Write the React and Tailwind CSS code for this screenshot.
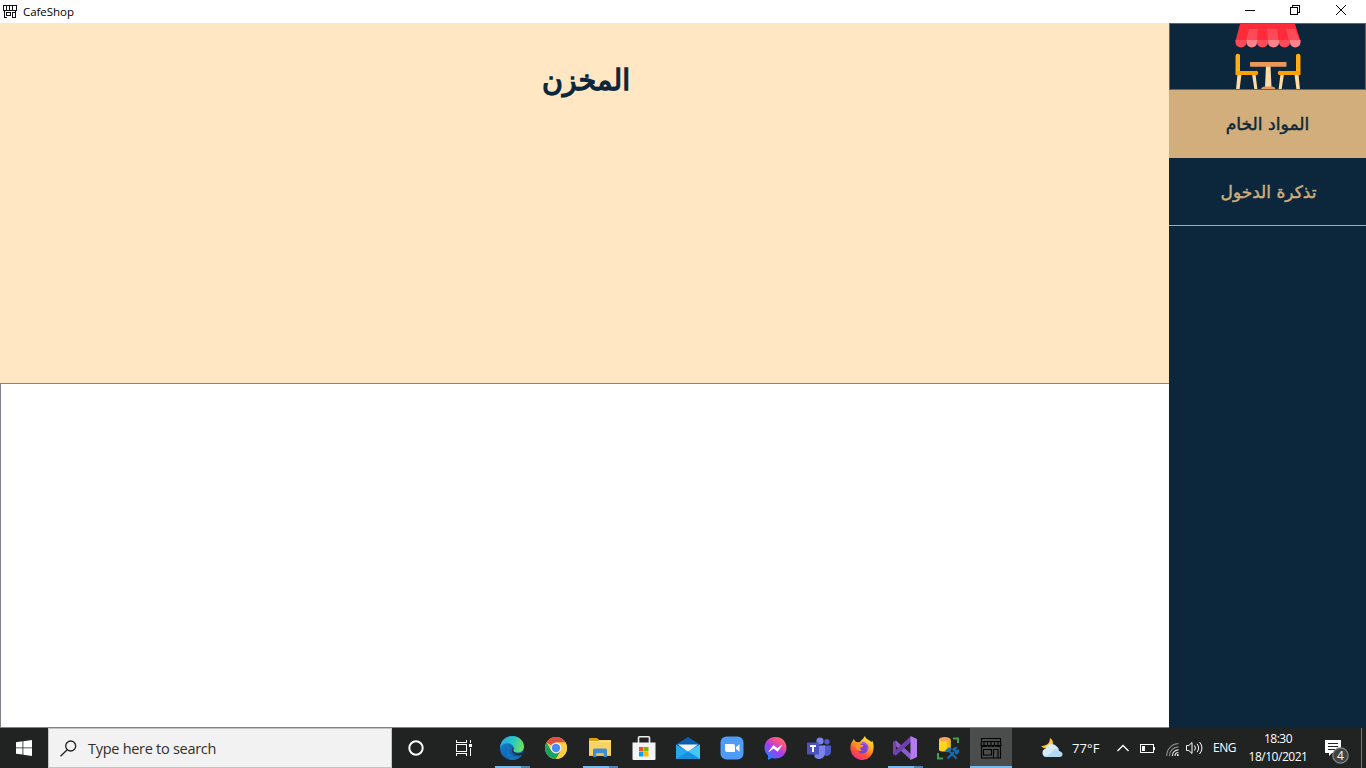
import React from "react";

const ARABIC = "font-['DejaVu_Sans',sans-serif]";
const LATIN = "font-['Open_Sans','Noto_Sans',sans-serif]";

function ShopIcon({ size = 14, color = "#000" }) {
  return (
    <svg width={size} height={size} viewBox="0 0 22 22" fill="none" stroke={color} strokeWidth="1.1">
      <path d="M1.5 1.5h19v3h-19zM1.5 4.5L1 8.500h20l-.5-4M1.500 10v11h19V10M1 8.500q1.400 2.500 3 0q1.500 2.500 3.500 0q1.700 2.500 3.500 0q1.700 2.500 3.500 0q1.700 2.500 3.500 0q1.400 2.500 3 0M4 4.500v4M7.500 4.500v4M11 4.500v4M14.500 4.500v4M18 4.500v4M3.500 12.500h8v5.500h-8zM13.500 21v-8.500h4.500V21" />
    </svg>
  );
}

function TitleIcon() {
  return (
    <svg width="14" height="14" viewBox="0 0 14 14" fill="none" stroke="#111" shapeRendering="crispEdges">
      <path d="M0 .5h14M.5 0v5.500M13.500 0v5.500M3.500 1v4M6.500 1v4M9.500 1v4M0 5.500h14M1.500 6v7M12.500 6v7M3 7.500h5M3.500 7v4M7.500 7v4M3 10.500h5M9.500 13V7.500h2M1 12.500h3M9 12.500h4" />
    </svg>
  );
}

function CafeLogo() {
  return (
    <svg width="66" height="66" viewBox="0 0 66 66">
      <path d="M5 0H60L65.500 17H.5z" fill="#ff2b3b" />
      <path d="M14 5H23L21.500 17H11zM51 5H60L65 17H54z" fill="#ff4a58" />
      <path d="M32 5H42L43.500 17H33z" fill="#ff4a58" />
      <path d="M.5 16H11.500V18.500a5.500 5 0 0 1-11 0z" fill="#ff4a58" />
      <path d="M11.500 16H22V18.500a5.250 5 0 0 1-10.500 0z" fill="#ff8189" />
      <path d="M22 16H33V18.500a5.500 5 0 0 1-11 0z" fill="#ff4a58" />
      <path d="M33 16H44V18.500a5.500 5 0 0 1-11 0z" fill="#ff8189" />
      <path d="M44 16H55V18.500a5.500 5 0 0 1-11 0z" fill="#ff4a58" />
      <path d="M55 16H65.500V18.500a5.250 5 0 0 1-10.500 0z" fill="#ff8189" />
      <path d="M2.500 50H6.500L4.500 66H1zM17 50H20.500L22.500 66H19.500zM45.500 50H49L46.500 66H43.500zM59.500 50H63.500L65 66H61.500z" fill="#ffdca5" />
      <path d="M.5 32a2.250 2.250 0 0 1 4.500 0V47H20a2 2 0 0 1 2 4H.5z" fill="#ff9f00" />
      <path d="M65.500 32a2.250 2.250 0 0 0-4.500 0V47H46a2 2 0 0 0-2 4H65.500z" fill="#ff9f00" />
      <path d="M1 32a2 2 0 0 1 4 0V47L1 48zM65 32a2 2 0 0 0-4 0V47L65 48z" fill="#ffae16" />
      <path d="M31 42H35.500L36.500 63H30z" fill="#ffdca5" />
      <rect x="15" y="38" width="36.500" height="4.800" rx=".7" fill="#e9985a" />
      <path d="M26 66q0-3.500 4-3.500h7q3.500 0 3.500 3.500z" fill="#e9985a" />
    </svg>
  );
}

function EdgeIcon() {
  return (
    <svg width="24" height="24" viewBox="0 0 24 24">
      <defs>
        <linearGradient id="edgeTop" x1="0" y1=".3" x2="1" y2=".5">
          <stop stopColor="#2aa7e8" /><stop offset=".5" stopColor="#27c5c8" /><stop offset="1" stopColor="#6de35a" />
        </linearGradient>
        <linearGradient id="edgeBottom" x1="0" y1="0" x2="1" y2="1">
          <stop stopColor="#1688dc" /><stop offset="1" stopColor="#114a8b" />
        </linearGradient>
      </defs>
      <circle cx="12" cy="12" r="12" fill="url(#edgeBottom)" />
      <path d="M0 11.500C1 4 6 0 12 0c7 0 12 5 12 10.500 0 4-3 6-6.500 6-2.800 0-4.300-1-4-2 .9-1 .9-2 .5-3C12.800 8.500 10 6.800 7 7.200 3.500 7.500 1 9.500 0 11.500z" fill="url(#edgeTop)" />
      <path d="M11.500 9.500c-3 2-3 7 .3 9.500 3.500 2.600 7.200 1.800 10.700-.5C20 22.500 16 24 12 24 5 23 3 14 11.500 9.500z" fill="#1572bd" />
      <path d="M13 11c-1 3 0 5.500 4 6.500 2.500.5 5-.1 7-1.700v2L22.500 19C18 20 12 18.500 12 14q0-2 1-3z" fill="#20282b" />
    </svg>
  );
}

function ChromeIcon() {
  return (
    <svg width="22" height="22" viewBox="0 0 22 22">
      <circle cx="11" cy="11" r="11" fill="#ffcd40" />
      <path d="M11 11L1.500 5.500A11 11 0 0 1 20.500 5.500H11z" fill="#dc5044" />
      <path d="M1.500 5.500A11 11 0 0 0 11 22l4.800-8.300L11 11 6.300 13.800z" fill="#1aa261" />
      <path d="M11 22A11 11 0 0 0 20.500 5.500H11l4.800 8.300z" fill="#ffcd40" />
      <circle cx="11" cy="11" r="5.400" fill="#f3f3f3" />
      <circle cx="11" cy="11" r="4.200" fill="#4c8bf5" />
    </svg>
  );
}

function ExplorerIcon() {
  return (
    <svg width="22" height="20" viewBox="0 0 22 20">
      <path d="M0 1h8l2 1h12v16H0z" fill="#f9d266" />
      <path d="M0 1q0-1 1-1h7l2 2-1 1H0z" fill="#e2a113" />
      <path d="M0 3h22v1H0z" fill="#ffe596" />
      <path d="M4 19v-7q0-1.500 1.500-1.500h11q1.500 0 1.500 1.500v7h-3.500v-4h-7v4z" fill="#3f8ed0" />
      <path d="M7.500 15h7v3h-7z" fill="#e8bd4e" />
      <path d="M0 17h4v1H0zM18 17h4v1h-4z" fill="#e9b83e" />
    </svg>
  );
}

function StoreIcon() {
  return (
    <svg width="24" height="24" viewBox="0 0 24 24">
      <path d="M6.500 7V1.800Q6.500.8 7.500.8H16.500q1 0 1 1V7" fill="none" stroke="#eee" strokeWidth="1.600" />
      <path d="M.5 6.500h23v16.500q0 1-1 1h-21q-1 0-1-1z" fill="#f4f4f4" />
      <path d="M7 11h4.500v4.500H7z" fill="#f25022" /><path d="M12 11h4.500v4.500H12z" fill="#7fba00" />
      <path d="M7 16h4.500v4.500H7z" fill="#00a4ef" /><path d="M12 16h4.500v4.500H12z" fill="#ffb900" />
    </svg>
  );
}

function MailIcon() {
  return (
    <svg width="24" height="23" viewBox="0 0 24 23">
      <path d="M0 7.500L12 0l12 7.500L12 16z" fill="#0c5eb0" />
      <path d="M2 7.500h20L12 15z" fill="#f5f5f5" />
      <path d="M0 7.500L12 14.500 24 7.500V22H0z" fill="#23a9ec" />
      <path d="M24 7.500V22L12 14.500z" fill="#43c7f5" />
      <path d="M0 22L12 14.500 24 22z" fill="#1790df" />
    </svg>
  );
}

function ZoomIcon() {
  return (
    <svg width="24" height="24" viewBox="0 0 24 24">
      <rect x=".5" y=".5" width="23" height="23" rx="6" fill="#4f9cf7" />
      <path d="M5 8h8q2 0 2 2v6H7q-2 0-2-2zM16 11l3.500-2.700v7.400L16 13z" fill="#fff" />
    </svg>
  );
}

function MessengerIcon() {
  return (
    <svg width="23" height="23" viewBox="0 0 23 23">
      <defs>
        <linearGradient id="messengerFill" x1=".15" y1="1" x2=".85" y2="0">
          <stop stopColor="#128bff" /><stop offset=".45" stopColor="#a13cf5" /><stop offset=".75" stopColor="#f74f8d" /><stop offset="1" stopColor="#ff7962" />
        </linearGradient>
      </defs>
      <path d="M11.500 0C5 0 .5 4.600.5 10.700c0 3.400 1.500 6 3.500 7.800V23l3.700-2c1.200.4 2.400.5 3.800.5 6.500 0 11-4.700 11-10.800S18 0 11.500 0z" fill="url(#messengerFill)" />
      <path d="M5 14.500L9.500 8.500l4 3L18 8l-4.300 6.300-4.200-3z" fill="#fff" stroke="#fff" strokeWidth=".8" />
    </svg>
  );
}

function TeamsIcon() {
  return (
    <svg width="24" height="23" viewBox="0 0 24 23">
      <circle cx="13" cy="4" r="3.600" fill="#7b83eb" />
      <circle cx="20" cy="4.800" r="2.700" fill="#5059c9" />
      <path d="M16 8.500h8v6.500a4 4 0 0 1-6.500 3z" fill="#5059c9" />
      <path d="M7.500 8.500H18V16a6 6 0 0 1-10.500 4z" fill="#7b83eb" />
      <rect x="0" y="5.500" width="12" height="12" rx=".6" fill="#4b53bc" />
      <path d="M3 9h6M6 9v6" stroke="#fff" strokeWidth="1.900" />
    </svg>
  );
}

function FirefoxIcon() {
  return (
    <svg width="24" height="24" viewBox="0 0 24 24">
      <defs>
        <linearGradient id="foxBody" x1=".8" y1="0" x2=".25" y2="1">
          <stop stopColor="#fff04a" /><stop offset=".4" stopColor="#ffa51f" /><stop offset=".7" stopColor="#ff5238" /><stop offset="1" stopColor="#e42c91" />
        </linearGradient>
      </defs>
      <path d="M3 4.500L3.500 3 6 6l4 .3C11 3.500 13.500 3.500 14 1l1-.8c.8 3 5 3.800 6.500 6L22 4.500c1.300 2 2 5 1.500 8.500A11.500 11.500 0 0 1 .6 14C0 10 1 6.500 3 4.500z" fill="url(#foxBody)" />
      <circle cx="12.500" cy="12.500" r="5.300" fill="#8042d5" />
      <path d="M4 8c3-2 5-1 6.500.5l3 .8c0 1.200-1.500 2-3 2.400-1 .6 0 2.500 1.500 2.300-2 2-5 .5-5.500-1.500z" fill="#ff931f" />
      <path d="M12 6.500c4 0 6 3 6 6" fill="none" stroke="#a14de1" strokeWidth="1.500" />
    </svg>
  );
}

function VisualStudioIcon() {
  return (
    <svg width="24" height="24" viewBox="0 0 24 24">
      <path d="M0 6l3-1.400L18 18v6L0 7.500z" fill="#8b5acb" />
      <path d="M0 18l3 1.400L18 6V0L0 16.500z" fill="#6f3fb0" />
      <path d="M0 6l3-1.400V19.400L0 18z" fill="#7541b4" />
      <path d="M17.500 0L24 3v18l-6.500 3z" fill="#b27cef" />
    </svg>
  );
}

function DatabaseIcon() {
  return (
    <svg width="22" height="23" viewBox="0 0 22 23">
      <path d="M2 2v11c0 2 11.500 2 11.500 0V2z" fill="#ffd51c" />
      <path d="M10 3h3.500v10q0 1-3.500 1.200z" fill="#f5b80b" />
      <ellipse cx="7.750" cy="2.300" rx="5.750" ry="2.200" fill="#f5a45e" />
      <path d="M16 1.500h5V6M1 16v5.500h5" fill="none" stroke="#42a052" strokeWidth="2" />
      <path d="M11 13l8.500 8.500M10.500 21.500l6.500-6.500M8.500 14.500l3.500-3 2.500.500M16 13.500q.500-3 3-2.500l-1.500 2 1.500 1.500 2-1q.500 3-3 3" fill="none" stroke="#0f6fbd" strokeWidth="1.900" />
    </svg>
  );
}

function Underline() {
  return (
    <span className="absolute bottom-0 left-[5px] flex h-[2px] w-[35px]">
      <span className="w-[26px] bg-[#76b9ed]" /><span className="flex-1 bg-[#5084ad]" />
    </span>
  );
}

function TaskApp({ children, running = false, narrow = false }) {
  return (
    <div className={`relative flex h-full shrink-0 items-center justify-center ${narrow ? "w-[43px]" : "w-[44px]"}`}>
      {children}{running && <Underline />}
    </div>
  );
}

function TitleBar() {
  return (
    <header className="flex h-[23px] shrink-0 items-center bg-white">
      <div className="ml-[3px] pt-px"><TitleIcon /></div>
      <span className={`ml-[6px] ${LATIN} text-[11.5px] leading-[22px] tracking-[-0.05px] text-black`}>CafeShop</span>
      <div className="ml-auto flex pb-px">
        <svg className="mr-[35px]" width="10" height="20" viewBox="0 0 10 20" shapeRendering="crispEdges"><path d="M0 9.500h10" stroke="#000" /></svg>
        <svg className="mr-[36px]" width="10" height="20" viewBox="0 0 10 20" fill="none" stroke="#000" shapeRendering="crispEdges"><path d="M.5 6.500h7v7h-7zM2.500 6V4.500h7v7H8" /></svg>
        <svg className="mr-[20px]" width="10" height="20" viewBox="0 0 10 20" stroke="#000"><path d="M0 4l10 10M10 4L0 14" /></svg>
      </div>
    </header>
  );
}

function Sidebar() {
  return (
    <aside dir="rtl" className="flex w-[197px] shrink-0 flex-col bg-[#0c273b]">
      <div className="flex h-[67px] items-start justify-center overflow-hidden border border-[#646468]"><CafeLogo /></div>
      <button className={`h-[68px] bg-[#d1ae7b] pt-[2px] ${ARABIC} text-[17.2px] [-webkit-text-stroke:0.45px_#0c273b] text-[#0c273b]`}>المواد الخام</button>
      <button className={`h-[68px] border-b border-[#b8a98e] pt-[2px] pl-[2px] ${ARABIC} text-[17px] [-webkit-text-stroke:0.45px_#d1ae7b] text-[#d1ae7b]`}>تذكرة الدخول</button>
    </aside>
  );
}

function Taskbar() {
  return (
    <footer className={`flex h-10 shrink-0 bg-[#212322] ${LATIN} text-white`}>
      <div className="flex w-12 items-center justify-center">
        <svg width="16" height="16" viewBox="0 0 16 16" fill="#fff"><path d="M0 2.200L6.500 1.300V7.500H0zM7.300 1.200L16 0V7.500H7.300zM0 8.300h6.500v6.300L0 13.800zM7.300 8.300H16V16L7.300 14.800z" /></svg>
      </div>
      <div className="flex w-[344px] items-center border border-[#c5c5c5] bg-[#f2f2f2] pl-[11px]">
        <svg width="17" height="17" viewBox="0 0 17 17" fill="none" stroke="#222" strokeWidth="1.300"><circle cx="10.700" cy="6" r="5" /><path d="M7.200 9.700L.5 16.300" /></svg>
        <span className="ml-[11px] whitespace-nowrap pt-0.5 text-[14.5px] tracking-[-0.28px] text-[#303030]">Type here to search</span>
      </div>
      <div className="flex w-12 items-center justify-center"><svg width="16" height="16" viewBox="0 0 16 16"><circle cx="8" cy="8" r="6.700" fill="none" stroke="#fff" strokeWidth="2" /></svg></div>
      <div className="mr-0.5 flex w-12 items-center justify-center">
        <svg width="16" height="16" viewBox="0 0 16 16" fill="none" stroke="#fff" shapeRendering="crispEdges"><path d="M.5 0v2.500h10V0M.5 4.500h10v7H.5zM.5 16v-2.500h10V16M14.500 0v3M14.500 8v8" /><path d="M13 4h3v3h-3z" fill="#fff" stroke="none" /></svg>
      </div>
      <TaskApp running><EdgeIcon /></TaskApp>
      <TaskApp><ChromeIcon /></TaskApp>
      <TaskApp running><ExplorerIcon /></TaskApp>
      <TaskApp><StoreIcon /></TaskApp>
      <TaskApp><MailIcon /></TaskApp>
      <TaskApp><ZoomIcon /></TaskApp>
      <TaskApp narrow><MessengerIcon /></TaskApp>
      <TaskApp narrow><TeamsIcon /></TaskApp>
      <TaskApp narrow><FirefoxIcon /></TaskApp>
      <TaskApp narrow running><VisualStudioIcon /></TaskApp>
      <TaskApp narrow><DatabaseIcon /></TaskApp>
      <div className="ml-px flex w-[42px] shrink-0 items-center justify-center border-b-2 border-[#76b9ed] bg-[#4b4d4c] pt-0.5"><ShopIcon size={22} /></div>
      <div className="flex flex-1 items-center pl-[29px]">
        <svg width="23" height="20" viewBox="0 0 23 20">
          <path d="M9 0c3 2 4 5 2 8s-7 4-11 0c5 0 9-2 9-8z" fill="#ffc830" />
          <path d="M5.500 19a4.200 4.200 0 0 1-.7-8.300 6.200 6.200 0 0 1 11-2.200 4.500 4.500 0 0 1 2 4.500 3.200 3.200 0 0 1 .5 6z" fill="#d7ecfa" />
          <path d="M3 18q7-1 10-7 4-1 5 2 4 1 3.500 4-.5 2-3 2H5z" fill="#b3daf5" />
        </svg>
        <span className="ml-2 w-[45px] whitespace-nowrap pt-0.5 text-[13px] tracking-[0.1px]">77°F</span>
        <svg width="12" height="8" viewBox="0 0 12 8" fill="none" stroke="#fff" strokeWidth="1.300"><path d="M.5 7L6 1.500 11.500 7" /></svg>
        <svg className="ml-[11px] translate-y-px" width="16" height="10" viewBox="0 0 16 10" shapeRendering="crispEdges"><path d="M.5.5h13v8H.5z" fill="none" stroke="#fff" /><path d="M2 2h3v5H2zM14 3h1v3h-1z" fill="#fff" /></svg>
        <svg className="ml-[10px] translate-y-px" width="13" height="13" viewBox="0 0 13 13" fill="none" stroke="#888" strokeWidth="1.200"><path d="M.7 13A12 12 0 0 1 12.500.7M3.500 13A9 9 0 0 1 12.500 3.800" /><path d="M6.300 13A6 6 0 0 1 12.500 6.800M9 13a3.500 3.500 0 0 1 3.500-3.500" stroke="#ddd" /><circle cx="11.800" cy="12" r="1" fill="#fff" stroke="none" /></svg>
        <svg className="ml-[7px]" width="18" height="14" viewBox="0 0 18 14" fill="none" stroke="#fff"><path d="M.5 4.500h2.300L6 1.500v11l-3.200-3H.5zM8.500 4.500q2 2.500 0 5M11 2.800q3.300 4.200 0 8.400M13.500 1q5 6 0 12" /></svg>
        <span className="ml-[9px] w-[24px] text-[12px] tracking-[-0.45px]">ENG</span>
        <div className="ml-[8px] flex w-[66px] shrink-0 flex-col items-center whitespace-nowrap text-[12px] leading-[18px] tracking-[-0.48px]"><span>18:30</span><span>18/10/2021</span></div>
        <svg className="ml-[14px] shrink-0 translate-y-1" width="26" height="24" viewBox="0 0 26 24">
          <path d="M0 0h16v13H7l-3 3v-3H0z" fill="#fff" /><path d="M3 3.500h10M3 6.500h10M3 9.500h7" stroke="#212322" />
          <circle cx="15.500" cy="15.500" r="7.700" fill="#414342" stroke="#888" strokeWidth="1.200" />
          <text x="15.500" y="20" fill="#fff" fontSize="12" textAnchor="middle" fontFamily="Open Sans">4</text>
        </svg>
      </div>
      <div className="mr-1 w-px shrink-0 bg-[#777]" />
    </footer>
  );
}

export default function App() {
  return (
    <div className="flex h-[768px] w-[1366px] flex-col overflow-hidden bg-white">
      <TitleBar />
      <div className="flex min-h-0 flex-1">
        <main className="flex min-w-0 flex-1 flex-col">
          <section className="h-[360px] bg-[#ffe7c4] pt-[38px] pl-[3px] text-center">
            <h1 dir="rtl" className={`${ARABIC} text-[28.5px] leading-[40px] [-webkit-text-stroke:1.3px_#0c273b] text-[#0c273b]`}>المخزن</h1>
          </section>
          <section className="flex-1 border-y border-l border-[#82838a] bg-white" />
        </main>
        <Sidebar />
      </div>
      <Taskbar />
    </div>
  );
}
